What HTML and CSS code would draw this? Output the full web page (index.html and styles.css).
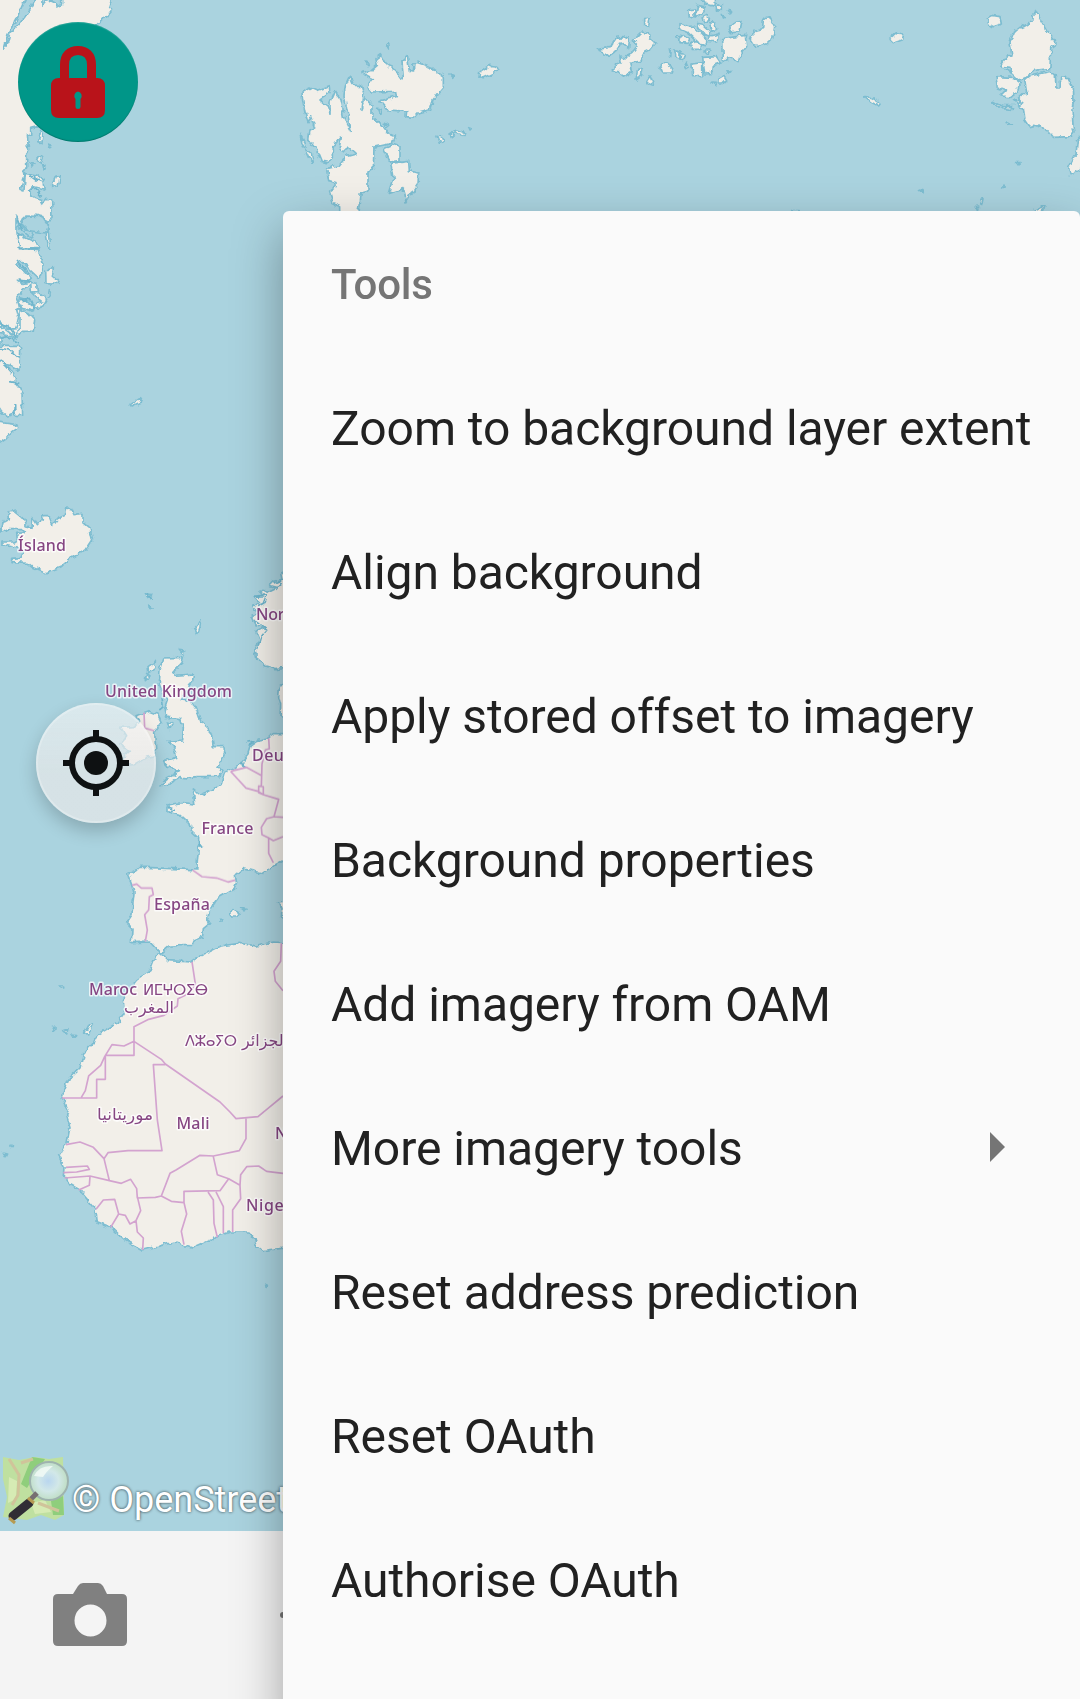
FILE: index.html
```html
<!DOCTYPE html>
<html lang="en">
<head>
<meta charset="utf-8">
<title>Map editor</title>
<link rel="stylesheet" href="styles.css">
</head>
<body>
<div class="screen">
  <main class="map">
    <svg class="map-tiles" viewBox="0 0 1080 1531" aria-hidden="true">
      <defs>
        <filter id="rugged" filterUnits="userSpaceOnUse" x="0" y="0" width="1080" height="1531" color-interpolation-filters="sRGB">
          <feTurbulence type="fractalNoise" baseFrequency=".16" numOctaves="2" seed="4"/>
          <feDisplacementMap in="SourceGraphic" scale="6" xChannelSelector="R" yChannelSelector="G"/>
        </filter>
      </defs>
      <g filter="url(#rugged)">
      <!-- Greenland -->
      <g class="land" transform="scale(.33333)">
        <path d="M-9-9H335L326 22 335 30 324 45 312 52 290 75 230 130 160 310 112 380 92 385 92 402 82 405 86 455 80 462 80 500 70 520 74 530 60 566 72 570 76 520 110 525 130 538 136 568 118 564 100 560 86 574 100 590 124 598 128 612 138 598 155 600 156 655 145 664 110 646 75 645 58 676 48 652 48 700 80 715 108 728 116 742 60 746 115 748 126 790 125 825 116 834 90 810 60 782 48 790 70 812 92 836 84 846 52 840 66 850 92 846 118 880 140 898 126 922 100 920 78 902 58 896 56 912 60 930 92 946 104 960 100 994 70 994 48 1012 10 984 0 966 24 988 48 986 56 950 50 930 60 924 90 930 100 936 104 912 128 904 96 880 104 870 94 850 48 890 60 918 60 980 44 1014 22 1004 0 1000V1036H56L62 1048 60 1110 30 1096 8 1092 40 1114 48 1150 60 1165 66 1180 68 1246 46 1246 44 1220 36 1246 20 1248 4 1236-9 1215Z"/>
        <path d="M-9 1266 50 1274 54 1282 36 1294 18 1314-9 1332Z"/>
        <path d="M122 394 130 400 126 428 116 425ZM146 432 152 442 143 444ZM120 464 128 470 122 486 112 482ZM166 532 178 530 172 556 158 562 158 550ZM90 490 102 492 96 501ZM128 490 138 496 132 510ZM128 660 142 665 150 750 142 740ZM137 810 160 806 157 835 178 836 174 850 138 848ZM148 872 154 880 145 890ZM92 846 110 850 112 875 94 876ZM80 652 140 665 132 690 70 670Z"/>
      </g>
      <g class="inlet" transform="scale(.33333)">
        <path d="M78-6H106L96 14 75 50 44 90 30 100 24 125 12 146 24 100 48 64Z"/>
        <path d="M126-6V16L136 4 150 0 168 8 175 20 185 14V-6ZM82 648 128 650 145 675 140 700 75 690 60 672ZM50 680 95 715 100 705 65 672Z"/>
        <path class="inlet-line" d="M90 525 110 540 128 545M85 574 105 565 125 590M50 650 65 690M55 745H115M48 780 90 825M60 840 90 845M0 970 30 985 48 1008M0 1015 20 1010 60 1030M0 1045 30 1050 58 1075M0 1080 35 1120M30 1145 58 1150M42 1215 45 1245M52 700 62 740M60 902 90 898 105 930"/>
      </g>
      <!-- Svalbard and Franz Josef Land -->
      <g class="land" transform="translate(280 0) scale(.33333)">
        <path d="M246 218 274 212 292 196 288 176 304 164 324 200 348 210 356 232 370 236 366 180 382 166 388 214 400 216 402 192 416 190 460 208 490 228 490 262 456 302 448 330 418 338 405 352 378 350 380 334 324 330 300 302 352 290 350 274 274 276 260 262 280 236Z"/>
        <path d="M66 276 90 264 112 274 148 260 150 278 120 300 142 318 150 340 150 304 164 272 180 296 190 350 214 398 192 286 196 258 208 232 218 256 244 256 252 282 246 328 258 296 276 318 276 352 310 380 322 396 344 406 336 430 282 442 280 506 264 516 264 572 244 578 236 650H182V620L160 612 148 574 168 560 168 548 146 542 140 506 176 498 198 470 228 462 208 444 190 455 178 446 184 408 160 440 160 470 142 488 124 484 110 450 86 420 90 390 104 384 92 350 84 368 76 340 68 300Z"/>
        <path d="M60 400 74 425 80 450 94 460 100 488 86 474 66 430ZM312 446 340 434 360 442 360 482 330 486 320 462ZM332 490 386 484 388 512 416 520 414 552 378 606 372 566 328 580 340 540ZM600 230 602 216 632 196 650 198 656 212 626 226 608 234ZM470 406 484 410 490 426 478 430ZM510 402 530 390 554 398 546 406 528 398 514 410ZM566 380 576 384 570 390ZM510 222 522 226 518 232ZM296 328 306 332 302 342ZM316 370 326 376 318 382ZM258 186 268 190 264 200ZM318 136 326 130 328 144ZM415 178 428 194 415 192Z"/>
        <path d="M952 148 990 142 1010 112 1030 110 1048 118 1046 146 1030 134 1020 126 1010 150 984 170 972 156ZM1060 122 1086 96 1108 100 1110 112 1128 128 1110 150 1090 160 1078 184 1050 190 1054 218 1030 232 1018 212 1000 210 1004 190 1024 192 1020 168 1036 174 1060 156 1074 138ZM1094 56 1110 54 1106 76 1094 74ZM1072 212 1088 208 1084 230 1068 240ZM1098 246 1110 228 1120 254ZM1140 206 1156 186 1178 206 1178 216 1148 216ZM1168 146 1174 150 1172 168ZM1184 150 1200 154V175L1188 170ZM1188 108 1200 106V118Z"/>
      </g>
      <g class="land" transform="translate(680 0) scale(.33333)">
        <path d="M62-6 104-6 102 18 76 12ZM106 10 124 20 124 34 110 32ZM52 16 72 20 72 38 48 54 50 34ZM26 32 44 30 46 50 28 50ZM0 68 26 80 42 78 80 118 80 134 58 130 24 98 0 88ZM50 70 66 72 92 96 90 108 72 104ZM88 68 106 70 110 88 96 94ZM66 54 82 46 90 60 72 66ZM0 108 30 116 22 130 0 128ZM28 134 46 122 64 138 62 148 34 148ZM90 108 114 102 112 126 88 124ZM72 150 90 150 84 162ZM36 192 68 188 68 230 38 230ZM68 172 110 170 122 188 100 196 98 220 74 222ZM128 116 196 106 200 140 184 160 176 186 156 174 130 182ZM146 84 170 66 186 64 180 96 154 98ZM210 112 228 90 248 86 250 56 268 50 284 80 278 116 260 132 228 140ZM114 236 132 226 140 240 128 252 114 252ZM96 246 108 248 104 256ZM140 212 150 214 144 220ZM142 32 158 36 154 42ZM2 160 14 164 8 178 0 178ZM20 186 26 200 16 206ZM124 46 138 50 128 55Z"/>
        <path d="M922 56 938 46 960 50 964 72 940 80 926 72ZM628 116 650 98 668 102 664 120 640 128ZM556 290 574 292 602 310 596 318 572 306ZM990 126 1004 90 1028 80 1058 62 1060 44 1070 36 1080 56 1100 90 1126 120 1128 134 1112 146 1110 206 1058 212 1034 234 1018 240 994 218 990 202 962 198 980 172 996 168ZM948 230 1000 232 1020 248 1012 274 992 290 960 288 976 272 952 264ZM1034 240 1050 228 1110 214 1126 224 1128 264 1140 264 1142 234 1164 236 1180 264 1182 300 1176 330 1180 386 1182 396 1170 410 1120 412 1100 388 1064 376 1050 380 1034 356 1030 322 1014 312 1018 294 1040 274ZM1206 402 1192 420 1188 460 1166 504 1170 524 1206 504ZM940 304 970 320 998 320 996 328 970 326 948 316ZM1000 300 1028 308 1016 318ZM978 366 998 374 984 376ZM718 570 732 572 728 580ZM900 600 912 596 908 616ZM886 620 896 618 892 634ZM1060 632 1092 616 1084 640H1060ZM1010 488H1020V494H1010ZM966 556H975V562H966ZM975 210 990 212 992 220ZM335 632H355V640H335Z"/>
      </g>
      <!-- Iceland, Jan Mayen -->
      <g class="land" transform="translate(0 220) scale(.33333)">
        <path d="M0 930 6 908 28 896 26 874 40 870 70 894 76 918 96 922 98 892 112 914 124 908 128 890 148 890 158 916 172 896 196 886 200 864 214 866 222 884 246 880 246 906 270 926 278 960 258 990 208 1018 184 1040 138 1058 96 1042 82 1030 36 1028 38 1018 60 1016 70 994 52 984 6 974 6 966 40 966 52 958 50 940 76 938 64 926 28 926 2 936ZM388 556 424 532 422 546 396 558Z"/>
      </g>
      <!-- British Isles, Scandinavia and small North Atlantic islands -->
      <g class="land" transform="translate(0 560) scale(.33333)">
        <path d="M492 294 550 292 546 308 518 338 522 346 580 342 578 362 568 376 564 392 552 408 544 420 574 424 590 448 602 484 624 504 636 532 640 560 672 560 674 580 664 604 654 620 666 632 656 650 590 650 564 654 540 650 508 672 480 678 500 656 526 642 536 634 500 618 490 602 530 592 520 560 506 544 548 540 550 500 542 476 500 472 496 446 504 422 490 404 478 372 480 330Z"/>
        <path d="M408 470 450 454 472 462 484 486 464 514 468 586 440 592 400 614 372 616 366 596 388 574 362 552 380 530 362 502 398 500 416 486ZM444 320 466 304 464 326 446 338ZM440 340 450 348 436 362ZM538 268 554 270 550 282ZM584 202 602 180 600 202 592 226ZM436 102 458 104 444 116ZM446 135 456 146 448 150ZM502 486 516 492 508 508Z"/>
        <path d="M890 18 842 40 846 58 820 64 808 76 830 82 806 94 780 90 788 108 762 108 780 128 760 136 776 160 756 170 770 198 790 204 768 214 778 240 764 264 770 294 800 318 825 326 890 318ZM890 368 838 378 836 412 842 434 840 470 890 474Z"/>
        <!-- Western Europe and Iberia -->
        <path d="M890 524 820 524 804 534 776 540 750 558 742 584 724 606 708 624 672 640 664 670 636 690 600 706 580 690 584 732 546 728 504 734 504 756 540 766 570 794 574 812 596 832 594 880 590 930 564 928 440 922 418 922 410 930 386 940 392 966 402 998 396 1064 380 1088 396 1104 394 1148 452 1146 484 1180 510 1158 576 1156 582 1140 608 1128 610 1106 632 1088 620 1078 626 1052 656 1012 704 984 710 970 706 944 728 926 790 940 826 914 890 880Z"/>
        <path d="M686 1060 700 1048 718 1058 712 1068 692 1068ZM722 1046 738 1048 734 1054ZM890 1020 838 1026 846 1046 844 1070 890 1086ZM180 1278H194V1284H180ZM188 1412 204 1406 200 1422ZM216 1422 230 1424 222 1432ZM254 1420 266 1396 278 1390 266 1422ZM160 1402H168V1408H160ZM660 1078H668V1086H660Z"/>
      </g>
      <!-- Africa -->
      <g class="land" transform="translate(0 800) scale(.33333)">
        <path d="M890 430 820 426 768 438 720 430 660 438 600 468 574 486 504 482 482 460 466 470 450 512 410 540 370 590 372 640 350 670 290 706 280 730 250 760 240 804 208 834 186 890 204 932 200 948 210 980 200 1034 176 1072 192 1100 190 1130 208 1152 236 1168 284 1224 288 1264 334 1282 380 1324 428 1350 524 1326 574 1344 640 1314 690 1296 744 1296 764 1318 768 1336 788 1352 890 1340ZM10 1060 20 1062 16 1070ZM794 1452 802 1456 796 1462ZM30 1036H37V1042H30Z"/>
      </g>
      <g class="coast-detail" transform="translate(0 560) scale(.33333)">
        <path d="M500 740 520 748 508 758M596 846 608 862 598 850M736 546 760 544 748 552M716 616 728 608 732 620M762 110 800 104 790 130 770 140M766 180 800 210 780 236 770 270M820 70 845 60 830 90M484 400 490 440 478 450M440 100 458 116"/>
      </g>
      </g>
      <!-- Country borders -->
      <g class="border" transform="translate(0 560) scale(.33333)">
        <path d="M806 534 808 566 796 570 786 612 784 680M692 634 740 622 784 646M692 634 712 656 738 684 774 694 790 704 836 718 822 770 849 772M776 678 776 698 790 704 790 680ZM822 770 800 776 784 802 786 824 806 834 820 842 849 830M806 834 806 880 820 908M578 930 606 950 650 954 684 966 706 960M432 458 434 504 462 512M396 976 410 972 424 984 456 984 460 1004 448 1010 446 1050 434 1064 442 1110 436 1144"/>
      </g>
      <g class="border" transform="translate(0 800) scale(.33333)">
        <path d="M576 486 586 552 568 580 534 596 532 618 492 646 446 658 402 680V766H316V838H290V894H186M402 724 372 738 336 734 314 770 302 796 266 828 256 872 244 892M402 724 484 778 496 792 660 906 690 936 708 956 774 950 849 888M496 794H460L472 960 486 1052H384L324 1058 312 1076 280 1042 240 1026 198 1034M312 1076 328 1142 364 1150 392 1138 410 1166 412 1194 466 1192 484 1188 514 1204 552 1208M190 1118 230 1116 268 1108 262 1098 198 1102M194 1134 270 1128 328 1142M270 1130 268 1156 236 1170M288 1228 310 1200 344 1198 356 1242 332 1282M356 1242 376 1246 390 1272 408 1262 422 1232 412 1190M408 1262 412 1296 430 1314 428 1350M484 1188 510 1120 528 1110 600 1066 640 1068 718 1052 738 1016V956M640 1070 652 1124 686 1136 660 1172 552 1174V1208L560 1242 544 1294 552 1334M624 1176 640 1200 642 1270 652 1312M648 1176 670 1220V1300M686 1136 720 1156 722 1196 698 1230V1296M720 1156 722 1124 740 1100 776 1098 800 1114 849 1120M844 430 842 484 822 514 826 544 849 572"/>
      </g>
      <!-- Country names -->
      <g class="place">
        <text x="18" y="550.500" textLength="48">Ísland</text>
        <text x="105" y="697" textLength="127">United Kingdom</text>
        <text x="256" y="620" textLength="47">Norge</text>
        <text x="252" y="761" textLength="101">Deutschland</text>
        <text x="201.500" y="834" textLength="52">France</text>
        <text x="154" y="910" textLength="56">España</text>
        <text x="89" y="994.500" textLength="48">Maroc</text>
        <text class="tifinagh" x="143" y="994.500" textLength="65">ⵍⵎⵖⵔⵉⴱ</text>
        <text class="arabic" x="124" y="1012.500" textLength="50" lengthAdjust="spacingAndGlyphs">المغرب</text>
        <text class="tifinagh" x="185" y="1045.500" textLength="52">ⴷⵣⴰⵢⵔ</text>
        <text class="arabic" x="242" y="1045.500" textLength="46" lengthAdjust="spacingAndGlyphs">الجزائر</text>
        <text class="arabic" x="97" y="1120" textLength="56" lengthAdjust="spacingAndGlyphs">موريتانيا</text>
        <text x="176.500" y="1129" textLength="33">Mali</text>
        <text x="275" y="1139" textLength="44">Niger</text>
        <text x="246" y="1210.500" textLength="60">Nigeria</text>
      </g>
    </svg>

    <button class="fab fab-lock" aria-label="Unlock editing">
      <svg viewBox="0 0 120 120">
        <path class="lock-shackle" d="M46.500 60V43C46.500 33 52 28.500 60 28.500S73.500 33 73.500 43V60"/>
        <path class="lock-body" fill-rule="evenodd" d="M41 56H79Q87 56 87 64V88Q87 96 79 96H41Q33 96 33 88V64Q33 56 41 56ZM60 69.500A4.500 4.500 0 0 0 57.500 77V85Q57.500 87 60 87T62.500 85V77A4.500 4.500 0 0 0 60 69.500Z"/>
      </svg>
    </button>
    <button class="fab fab-locate" aria-label="Go to current location">
      <svg viewBox="0 0 120 120">
        <circle class="locate-ring" cx="60" cy="60" r="24"/>
        <circle cx="60" cy="60" r="12"/>
        <path d="M57 27H63V36H57ZM57 84H63V93H57ZM27 57H36V63H27ZM84 57H93V63H84Z"/>
      </svg>
    </button>

    <footer class="attribution">
      <svg class="osm-logo" viewBox="0 0 68 70" aria-hidden="true">
        <defs>
          <radialGradient id="lens" cx=".48" cy=".5" r=".55">
            <stop offset="0" stop-color="#b9d6ef"/><stop offset=".5" stop-color="#d2e8e8"/><stop offset="1" stop-color="#bcdcbf"/>
          </radialGradient>
        </defs>
        <path fill="#bfe0a0" d="M0 0 16 3 32 0 46 2 60 0 61 58 52 63 38 58 24 63 0 60 4 40 0 22Z"/>
        <path fill="#8fce7c" d="M29 0 42 2 24 31 18 27ZM48 44 60 39 61 58 50 58Z"/>
        <path fill="#d6ebb4" d="M28 46 42 43 48 55 32 57ZM6 20 14 24 13 42 5 46Z"/>
        <path fill="none" stroke="#d0c49a" stroke-width="3" d="M6 2 16 18 15 38 9 48M35 46 56 54M18 6 30 2"/>
        <circle cx="46" cy="24" r="19" fill="url(#lens)" stroke="#9eb3ae" stroke-width="2"/>
        <path fill="#f4fbf6" opacity=".8" d="M31 19Q36 8 50 9 43 15 40 20Z"/>
        <path fill="none" stroke="#776f72" stroke-width="5" d="M28 42 34 36"/>
        <path fill="none" stroke="#302e35" stroke-width="9" stroke-linecap="round" d="M10 59 26 46"/>
        <path fill="none" stroke="#b69b53" stroke-width="3" d="M25 41 31 46M6 61 12 66"/>
      </svg>
      <span class="copyright">© OpenStreetMap contributors</span>
    </footer>
  </main>

  <nav class="toolbar">
    <button class="tool" aria-label="Camera">
      <svg class="camera" viewBox="0 0 74 63">
        <path fill-rule="evenodd" d="M5 11H20L25 3Q27 0 30 0H45Q48 0 50 3L54 11H69Q74 11 74 16V58Q74 63 69 63H5Q0 63 0 58V16Q0 11 5 11ZM37.500 21.500A16 16 0 1 0 37.500 53.500 16 16 0 1 0 37.500 21.500Z"/>
      </svg>
    </button>
    <button class="tool more" aria-label="More"><i></i></button>
  </nav>

  <section class="menu">
    <h1 class="menu-title">Tools</h1>
    <ul class="menu-list">
      <li>Zoom to background layer extent</li>
      <li>Align background</li>
      <li>Apply stored offset to imagery</li>
      <li>Background properties</li>
      <li>Add imagery from OAM</li>
      <li>More imagery tools <svg class="arrow" viewBox="0 0 15 30"><path d="M0 0 15 15 0 30Z"/></svg></li>
      <li>Reset address prediction</li>
      <li>Reset OAuth</li>
      <li>Authorise OAuth</li>
    </ul>
  </section>
</div>
</body>
</html>
```
FILE: styles.css
```css
* { box-sizing: border-box; }

body {
  margin: 0;
  font-family: Roboto, "Liberation Sans", sans-serif;
}

button {
  border: 0;
  padding: 0;
  background: none;
}

.screen {
  position: relative;
  display: flex;
  flex-direction: column;
  width: 1080px;
  height: 1699px;
  overflow: hidden;
}

/* Map */
.map {
  position: relative;
  flex: 1;
  display: flex;
  flex-direction: column;
  justify-content: flex-end;
  background: #aad3df;
  overflow: hidden;
}

.map-tiles {
  position: absolute;
  inset: 0;
  width: 1080px;
  height: 1531px;
}

.land {
  fill: #f2efe9;
  stroke: #7dbdd1;
  stroke-width: 5;
  stroke-linejoin: round;
}

.inlet { fill: #aad3df; stroke: #7dbdd1; stroke-width: 5; }
.inlet-line,
.coast-detail { fill: none; stroke: #6fb5cc; stroke-width: 5; }

.border {
  fill: none;
  stroke: #d3a3cf;
  stroke-width: 5;
  stroke-linejoin: round;
}

.place {
  font-family: "Noto Sans", sans-serif;
  font-size: 16px;
  font-weight: 500;
  fill: #864683;
  stroke: rgba(255, 255, 255, .75);
  stroke-width: 3px;
  stroke-linejoin: round;
  paint-order: stroke;
}

.tifinagh { font-family: "DejaVu Sans", sans-serif; font-size: 15px; }
.arabic { font-family: "DejaVu Sans", sans-serif; font-size: 16px; }

/* Floating buttons */
.fab {
  position: absolute;
  width: 120px;
  height: 120px;
  border-radius: 50%;
}

.fab svg { display: block; width: 120px; height: 120px; }

.fab-lock {
  left: 18px;
  top: 22px;
  background: #009688;
  box-shadow: inset 0 -1px 1px rgba(0, 0, 0, .2), inset 0 1px 1px rgba(255, 255, 255, .15);
}

.lock-shackle { fill: none; stroke: #b9131a; stroke-width: 9; }
.lock-body { fill: #b9131a; }

.fab-locate {
  left: 36px;
  top: 703px;
  background: linear-gradient(rgba(245, 245, 245, .64), rgba(232, 232, 232, .7) 60%);
  box-shadow: 0 8px 18px rgba(0, 0, 0, .2), inset 0 0 0 2px rgba(255, 255, 255, .22);
  fill: #0e1112;
}

.locate-ring { fill: none; stroke: #0e1112; stroke-width: 6; }

/* Attribution */
.attribution {
  position: relative;
  display: flex;
  align-items: flex-start;
  height: 74px;
  padding-left: 3px;
  white-space: nowrap;
}

.osm-logo { flex: none; width: 68px; height: 70px; }

.copyright {
  margin-left: 1px;
  padding-top: 22px;
  font-size: 36px;
  line-height: 42px;
  color: #fff;
  text-shadow: 0 0 3px rgba(0, 0, 0, .75);
}

/* Bottom bar */
.toolbar {
  display: flex;
  height: 168px;
  padding-bottom: 1px;
  background: #f4f4f4;
}

.tool {
  display: flex;
  align-items: center;
  justify-content: center;
  width: 180px;
}

.camera { width: 74px; height: 63px; fill: #808080; }

.more { justify-content: flex-start; padding-left: 100px; }
.more i { width: 6px; height: 6px; border-radius: 50%; background: #757575; }

/* Popup menu */
.menu {
  position: absolute;
  left: 283px;
  top: 211px;
  width: 797px;
  height: 1520px;
  padding: 2px 48px;
  border-radius: 6px;
  background: #fafafa;
  box-shadow: 0 20px 50px rgba(0, 0, 0, .34);
}

.menu-title {
  margin: 0 0 -1px;
  font-size: 42px;
  font-weight: 500;
  line-height: 144px;
  letter-spacing: -.2px;
  color: #757575;
}

.menu-list { margin: 0; padding: 0; list-style: none; }

.menu-list li {
  display: flex;
  align-items: center;
  justify-content: space-between;
  height: 144px;
  padding-right: 27px;
  font-size: 48px;
  letter-spacing: -.04px;
  white-space: nowrap;
  color: #212121;
}

.arrow { width: 15px; height: 30px; margin-bottom: 2px; fill: #757575; }
```
